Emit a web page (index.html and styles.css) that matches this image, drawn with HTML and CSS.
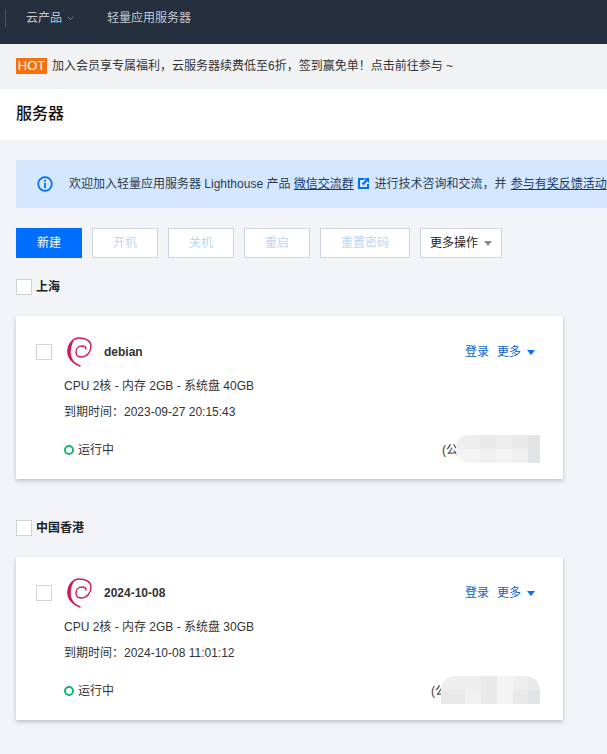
FILE: index.html
```html
<!DOCTYPE html>
<html lang="zh-CN">
<head>
<meta charset="utf-8">
<title>服务器</title>
<link rel="stylesheet" href="styles.css">
</head>
<body>
<header class="topnav">
  <span class="nav-sep"></span>
  <span class="nav-item">云产品<svg class="nav-chev" width="7" height="5" viewBox="0 0 7 5"><path d="M.8 1l2.7 2.6L6.2 1" fill="none" stroke="#7d8794" stroke-width="1"/></svg></span>
  <span class="nav-item nav-second">轻量应用服务器</span>
</header>
<div class="promo"><span class="hot">HOT</span><span>加入会员享专属福利，云服务器续费低至6折，签到赢免单！点击前往参与 ~</span></div>
<div class="titlebar"><h1>服务器</h1></div>
<main class="content">
  <div class="alert">
    <svg class="alert-icon" width="16" height="16" viewBox="0 0 16 16"><circle cx="8" cy="8" r="6.8" fill="none" stroke="#006eff" stroke-width="1.7"/><rect x="7.1" y="3.9" width="1.8" height="1.8" fill="#006eff"/><rect x="7.1" y="6.8" width="1.8" height="5.3" fill="#006eff"/></svg>
    <span class="alert-text">欢迎加入轻量应用服务器 Lighthouse 产品 <a>微信交流群</a> <svg class="ext" width="11" height="11" viewBox="0 0 11 11"><path d="M0 0h6v2H2v7h7V6h2v5H0z" fill="#006eff"/><path d="M6 0h5v5L9.3 3.3 5.4 7.2 3.8 5.6l3.9-3.9z" fill="#006eff"/></svg> 进行技术咨询和交流，并 <a class="alert-link">参与有奖反馈活动</a></span>
  </div>
  <div class="toolbar">
    <button class="btn primary">新建</button>
    <button class="btn disabled">开机</button>
    <button class="btn disabled">关机</button>
    <button class="btn disabled">重启</button>
    <button class="btn disabled wide">重置密码</button>
    <button class="btn more">更多操作<i class="caret grey"></i></button>
  </div>

  <section class="group first">
    <label class="group-head"><span class="check"></span>上海</label>
    <article class="card">
      <div class="card-top">
        <span class="check card-check"></span>
        <svg class="logo" width="28" height="32" viewBox="0 0 28 32"><path d="M15 30C8 27 3 23 3 16 3 8 8 2 14 2c7 0 12 3 12 8 0 6-4 11-10 11-3 0-5-2-5-5 0-4 3-6 6-6 2 0 4 1 4 3" fill="none" stroke="#d0185c" stroke-width="1.400" stroke-linecap="round"/><path d="M15 30C8 28 2.500 23 2.500 16 2.500 10 5 6 9 4 7 8 5.500 12 5.800 17 6 23 10 27 15 30z" fill="#d0185c"/></svg>
        <span class="name">debian</span>
        <span class="actions"><a>登录</a><a>更多</a><i class="caret blue"></i></span>
      </div>
      <p class="spec">CPU 2核 - 内存 2GB - 系统盘 40GB</p>
      <p class="spec expire">到期时间：2023-09-27 20:15:43</p>
      <div class="card-foot">
        <span class="status"><i class="dot"></i>运行中</span>
        <span class="ip">(公<span class="mosaic mosaic-a">
          <i class="c2"></i><i class="c3"></i><i class="c2"></i><i class="c3"></i><i class="c4"></i>
          <i class="c1"></i><i class="c5"></i><i class="c1"></i><i class="c5"></i><i class="c4"></i>
        </span></span>
      </div>
    </article>
  </section>

  <section class="group second">
    <label class="group-head"><span class="check"></span>中国香港</label>
    <article class="card">
      <div class="card-top">
        <span class="check card-check"></span>
        <svg class="logo" width="28" height="32" viewBox="0 0 28 32"><path d="M15 30C8 27 3 23 3 16 3 8 8 2 14 2c7 0 12 3 12 8 0 6-4 11-10 11-3 0-5-2-5-5 0-4 3-6 6-6 2 0 4 1 4 3" fill="none" stroke="#d0185c" stroke-width="1.400" stroke-linecap="round"/><path d="M15 30C8 28 2.500 23 2.500 16 2.500 10 5 6 9 4 7 8 5.500 12 5.800 17 6 23 10 27 15 30z" fill="#d0185c"/></svg>
        <span class="name">2024-10-08</span>
        <span class="actions"><a>登录</a><a>更多</a><i class="caret blue"></i></span>
      </div>
      <p class="spec">CPU 2核 - 内存 2GB - 系统盘 30GB</p>
      <p class="spec expire">到期时间：2024-10-08 11:01:12</p>
      <div class="card-foot">
        <span class="status"><i class="dot"></i>运行中</span>
        <span class="ip">(公<span class="mosaic mosaic-b">
          <i class="c2"></i><i class="c2"></i><i class="c3"></i><i class="c1"></i><i class="c2"></i><i class="c3"></i>
          <i class="c3"></i><i class="c5"></i><i class="c3"></i><i class="c1"></i><i class="c3"></i><i class="c4"></i>
        </span></span>
      </div>
    </article>
  </section>
</main>
</body>
</html>
```

FILE: styles.css
```css
* { box-sizing: border-box; }
html, body { margin: 0; padding: 0; }
body {
  width: 607px;
  height: 754px;
  overflow: hidden;
  background: #f3f4f8;
  color: #222;
  font: 12px/18px "Liberation Sans", "Noto Sans CJK SC", sans-serif;
}
.topnav {
  height: 44px;
  background: #262f3e;
  display: flex;
  align-items: center;
  padding-bottom: 8px;
  padding-left: 5px;
  color: #c4c8cd;
}
.nav-sep { width: 1px; height: 18px; background: #4a5361; }
.nav-item { margin-left: 20px; display: flex; align-items: center; }
.nav-chev { margin-left: 5px; }
.nav-second { margin-left: 33px; }
.promo {
  height: 45px;
  background: #f1f2f4;
  display: flex;
  align-items: center;
  padding-left: 16px;
  padding-bottom: 1px;
  color: #333;
}
.hot {
  width: 31px;
  height: 16px;
  background: #f5700f;
  color: #fff;
  font-size: 13px;
  line-height: 16px;
  text-align: center;
  margin-right: 5px;
}
.titlebar {
  height: 51px;
  background: #fff;
  display: flex;
  align-items: center;
  padding-left: 16px;
  padding-bottom: 2px;
}
h1 { margin: 0; font-size: 16px; font-weight: 500; color: #111; }
.content { padding: 20px 0 0 16px; }
.alert {
  height: 48px;
  background: #d5e7ff;
  display: flex;
  align-items: center;
  padding-left: 21px;
  white-space: nowrap;
  overflow: hidden;
  color: #2b3a4d;
}
.alert-icon { flex: none; margin-right: 16px; }
.alert-text a { color: #113b73; text-decoration: underline; }
.alert-text .alert-link { margin-left: 1px; }
.ext { vertical-align: -1px; margin: 0 2px 0 1px; }
.toolbar { display: flex; gap: 10px; margin-top: 20px; }
.btn {
  width: 66px;
  height: 30px;
  padding: 0;
  font: inherit;
  background: #fff;
  border: 1px solid #cfd5de;
  color: #222;
}
.primary { background: #006eff; border-color: #006eff; color: #fff; }
.disabled { color: #bcd5f2; }
.wide { width: 90px; }
.more { width: 82px; display: flex; align-items: center; justify-content: center; }
.caret { width: 0; height: 0; display: inline-block; border-style: solid; border-width: 5px 4px 0; border-color: transparent; }
.caret.grey { border-top-color: #888; margin-left: 6px; }
.caret.blue { border-top-color: #006eff; }
.group-head { display: flex; align-items: center; height: 17px; font-weight: 700; color: #222; }
.group.first { margin-top: 20px; }
.group.second { margin-top: 40px; }
.check { width: 16px; height: 16px; background: #fff; border: 1px solid #cfd2d8; flex: none; }
.group-head .check { margin-right: 4px; }
.card {
  width: 547px;
  height: 163px;
  margin-top: 21px;
  background: #fff;
  box-shadow: 0 2px 4px rgba(54, 58, 80, .28);
  padding: 20px 23px 0 20px;
}
.card-top { display: flex; align-items: center; height: 32px; }
.card-check { margin-right: 13px; }
.logo { flex: none; margin-right: 11px; }
.name { font-weight: 700; color: #333; }
.actions { margin-left: auto; margin-right: 5px; display: flex; align-items: center; gap: 8px; color: #0a62cc; }
.actions .caret { margin-left: -2px; }
.spec { margin: 1px 0 0 28px; color: #333; height: 18px; padding-top: 8px; line-height: 18px; box-sizing: content-box; }
.expire { margin-top: 0; }
.card-foot { display: flex; justify-content: space-between; align-items: center; margin: 15px 0 0 28px; height: 28px; color: #333; }
.status { display: flex; align-items: center; }
.dot { width: 10px; height: 10px; border: 2px solid #11b66c; border-radius: 50%; margin-right: 4px; }
.ip { display: flex; align-items: center; color: #333; }
.mosaic { display: grid; grid-template-rows: 14px 14px; height: 28px; margin-top: -2px; overflow: hidden; }
.mosaic-a { width: 84px; margin-left: -2px; grid-template-columns: 24px 16px 16px 16px 12px; border-radius: 12px 0 0 12px; }
.mosaic-b { width: 99px; margin-left: -6px; grid-template-columns: 24px 16px 16px 16px 15px 12px; border-radius: 14px 14px 0 0; }
.c1 { background: #f4f4f4; }
.c2 { background: #eeeeee; }
.c3 { background: #e9e9e9; }
.c4 { background: #e3e4e6; }
.c5 { background: #f0f0f0; }
```
